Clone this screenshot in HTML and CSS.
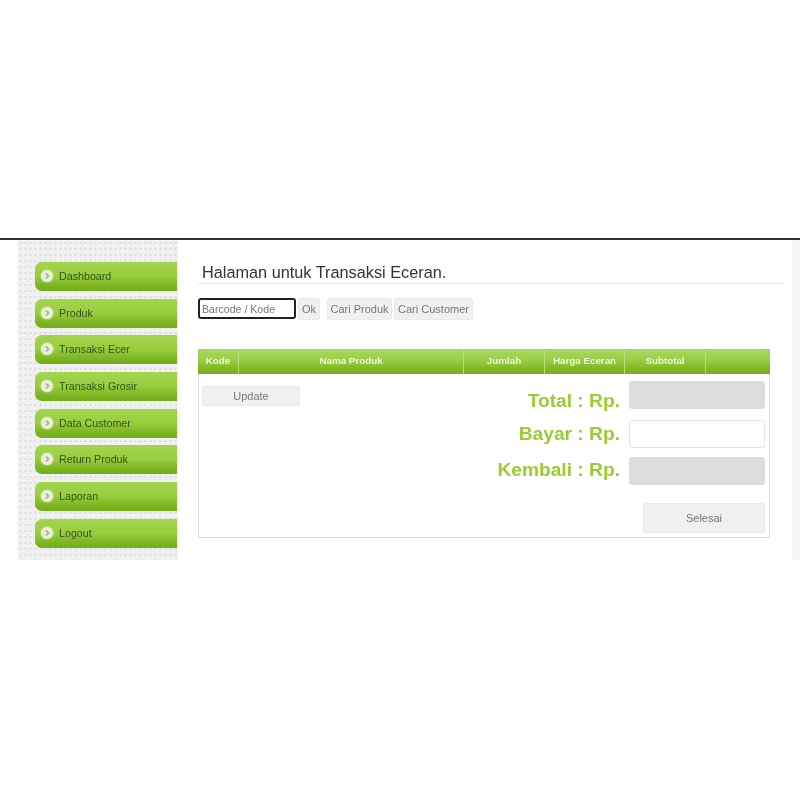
FILE: index.html
```html
<!DOCTYPE html>
<html lang="id">
<head>
  <meta charset="UTF-8">
  <title>Transaksi Eceran</title>
  <link rel="stylesheet" href="styles.css">
</head>
<body>
  <div class="page">
    <div class="sidebar">
      <a class="menu-item"><span class="bullet"><svg viewBox="0 0 10 10" width="10" height="10"><path d="M4 2.5 L6.5 5 L4 7.5" fill="none" stroke="#a3ab92" stroke-width="1.6"/></svg></span>Dashboard</a>
      <a class="menu-item"><span class="bullet"><svg viewBox="0 0 10 10" width="10" height="10"><path d="M4 2.5 L6.5 5 L4 7.5" fill="none" stroke="#a3ab92" stroke-width="1.6"/></svg></span>Produk</a>
      <a class="menu-item"><span class="bullet"><svg viewBox="0 0 10 10" width="10" height="10"><path d="M4 2.5 L6.5 5 L4 7.5" fill="none" stroke="#a3ab92" stroke-width="1.6"/></svg></span>Transaksi Ecer</a>
      <a class="menu-item"><span class="bullet"><svg viewBox="0 0 10 10" width="10" height="10"><path d="M4 2.5 L6.5 5 L4 7.5" fill="none" stroke="#a3ab92" stroke-width="1.6"/></svg></span>Transaksi Grosir</a>
      <a class="menu-item"><span class="bullet"><svg viewBox="0 0 10 10" width="10" height="10"><path d="M4 2.5 L6.5 5 L4 7.5" fill="none" stroke="#a3ab92" stroke-width="1.6"/></svg></span>Data Customer</a>
      <a class="menu-item"><span class="bullet"><svg viewBox="0 0 10 10" width="10" height="10"><path d="M4 2.5 L6.5 5 L4 7.5" fill="none" stroke="#a3ab92" stroke-width="1.6"/></svg></span>Return Produk</a>
      <a class="menu-item"><span class="bullet"><svg viewBox="0 0 10 10" width="10" height="10"><path d="M4 2.5 L6.5 5 L4 7.5" fill="none" stroke="#a3ab92" stroke-width="1.6"/></svg></span>Laporan</a>
      <a class="menu-item"><span class="bullet"><svg viewBox="0 0 10 10" width="10" height="10"><path d="M4 2.5 L6.5 5 L4 7.5" fill="none" stroke="#a3ab92" stroke-width="1.6"/></svg></span>Logout</a>
    </div>
    <div class="content">
      <h2 class="title">Halaman untuk Transaksi Eceran.</h2>
      <div class="toolbar">
        <div class="barcode">Barcode / Kode</div>
        <button class="btn btn-ok">Ok</button>
        <button class="btn btn-produk">Cari Produk</button>
        <button class="btn btn-customer">Cari Customer</button>
      </div>
      <div class="table-box">
        <div class="table-head">
          <div class="col col-kode">Kode</div>
          <div class="col col-nama">Nama Produk</div>
          <div class="col col-jumlah">Jumlah</div>
          <div class="col col-harga">Harga Eceran</div>
          <div class="col col-sub">Subtotal</div>
          <div class="col col-end"></div>
        </div>
        <div class="table-body">
          <button class="btn btn-update">Update</button>
          <div class="totals">
            <div class="total-row row-total"><span class="total-label">Total : Rp.</span><div class="field field-off"></div></div>
            <div class="total-row row-bayar"><span class="total-label">Bayar : Rp.</span><div class="field"></div></div>
            <div class="total-row row-kembali"><span class="total-label">Kembali : Rp.</span><div class="field field-off"></div></div>
            <button class="btn btn-selesai">Selesai</button>
          </div>
        </div>
      </div>
    </div>
  </div>
</body>
</html>
```
FILE: styles.css
```css
html, body { margin:0; padding:0; background:#fff; }
body { height:800px; overflow:hidden; font-family:"Liberation Sans", Arial, sans-serif; }
.page { display:flex; height:320px; margin-top:238px; border-top:2px solid #333; padding-left:18px; filter:blur(.55px); background:linear-gradient(to right, #fff 792px, #f5f5f5 792px); }

.sidebar { width:142px; padding:22px 1px 0 17px; flex:none; background-color:#f0f0f0; background-image:radial-gradient(#e0e0e0 1px, transparent 1.3px), radial-gradient(#fafafa 1px, transparent 1.3px), radial-gradient(#e4e4e4 .8px, transparent 1px); background-size:5px 6px, 7px 5px, 11px 9px; background-position:0 0, 2px 3px, 4px 1px; }
.menu-item { display:flex; align-items:center; height:29px; margin-bottom:7.7px; padding-bottom:1px; box-sizing:border-box; border-radius:7px 0 0 7px; font-size:10.7px; color:#34511a; background:linear-gradient(to bottom, #a4d54e 0%, #98cd3e 50%, #7db523 80%, #74ad18 100%); }
.bullet { display:flex; align-items:center; justify-content:center; width:12px; height:12px; margin:0 6px; border-radius:50%; background:#e8f0d8; box-shadow:0 0 2px #e8f0d8; }

.content { width:572px; padding-left:20px; flex:none; background:#fff; }
.title { margin:0 -13px 0 0; padding:23px 0 2px 4px; height:18px; font-size:16.3px; font-weight:normal; color:#333; border-bottom:1px dotted #ccc; }
.toolbar { display:flex; margin-top:14px; }
.barcode { box-sizing:border-box; width:98px; height:21px; padding:2px; font-size:10.6px; line-height:14px; color:#777; background:#fff; border:2px solid #222; border-radius:3px; }
.btn { box-sizing:border-box; padding:0; font-family:inherit; font-size:11px; color:#777; background:#f0f0f0; border:1px solid #eaeaea; border-radius:3px; }
.btn-ok { width:22px; height:22px; margin-left:2px; }
.btn-produk { width:65px; height:22px; margin-left:7px; }
.btn-customer { width:79px; height:22px; margin-left:2px; }

.table-box { height:189px; margin-top:29px; border:1px solid #ddd; border-top:0; box-sizing:border-box; }
.table-head { display:flex; height:25px; margin:0 -1px; background:linear-gradient(to bottom, #a8d860 0%, #9acd45 45%, #7ab51f 85%, #76b01a 100%); }
.col { box-sizing:border-box; height:25px; line-height:24px; text-align:center; font-size:9.8px; font-weight:bold; color:#eef6dc; border-right:1px solid #b8dc80; }
.col-kode { width:41px; }
.col-nama { width:225px; }
.col-jumlah { width:81px; }
.col-harga { width:80px; }
.col-sub { width:81px; }
.col-end { flex:1; border-right:0; }
.table-body { display:flex; justify-content:space-between; padding:7px 4px 0 3px; }
.btn-update { width:98px; height:20px; margin-top:5px; }
.totals { display:flex; flex-direction:column; align-items:flex-end; }
.total-row { display:flex; height:28px; margin-bottom:9px; }
.row-total { margin-bottom:11px; }
.total-label { font-size:19.2px; line-height:22px; font-weight:bold; color:#9acd32; margin-right:9px; }
.row-total .total-label { padding-top:9px; }
.row-bayar .total-label { padding-top:3px; }
.row-kembali .total-label { padding-top:2px; }
.field { box-sizing:border-box; width:136px; height:28px; background:#fff; border:1px solid #e4e4e4; border-radius:3px; }
.field-off { background:#dcdcdc; border-color:#dcdcdc; }
.btn-selesai { width:122px; height:30px; margin-top:9px; }
```
